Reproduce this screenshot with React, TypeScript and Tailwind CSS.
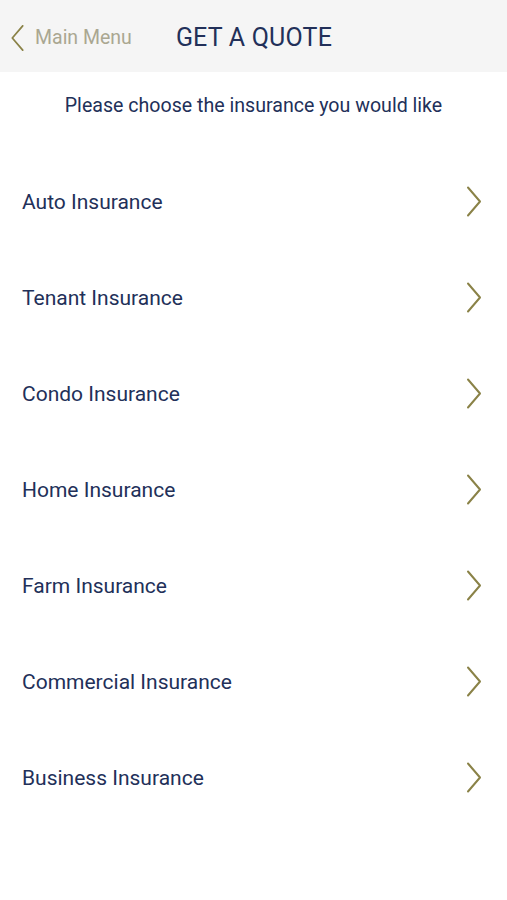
const ITEMS = [
  "Auto Insurance",
  "Tenant Insurance",
  "Condo Insurance",
  "Home Insurance",
  "Farm Insurance",
  "Commercial Insurance",
  "Business Insurance",
];

function Chevron({ left = false, className = "" }: { left?: boolean; className?: string }) {
  return (
    <svg
      viewBox="0 0 16 30"
      className={className}
      fill="none"
      stroke="currentColor"
      strokeWidth={2}
      strokeLinecap="round"
      strokeLinejoin="round"
    >
      {left ? <path d="M14 1 L2 15 L14 29" /> : <path d="M2 1 L14 15 L2 29" />}
    </svg>
  );
}

export default function App() {
  return (
    <div
      className="min-h-[900px] w-full bg-white"
      style={{ fontFamily: "Roboto, 'Noto Sans', sans-serif" }}
    >
      <header className="flex h-[72px] items-center bg-[#f5f5f5] pl-[10px] pt-[4px]">
        <button type="button" className="flex items-center">
          <Chevron left className="h-[26px] w-[15px] text-[#8a8247]" />
          <span className="ml-[10px] text-[19.5px] text-[#aaa791]">Main Menu</span>
        </button>
        <h1 className="ml-[44px] text-[25px] tracking-[0.2px] text-[#223059]">
          GET A QUOTE
        </h1>
      </header>

      <p className="mt-[21px] text-center text-[19.6px] leading-[26px] text-[#223059]">
        Please choose the insurance you would like
      </p>

      <ul className="mt-[35px]">
        {ITEMS.map((item) => (
          <li
            key={item}
            className="flex h-[96px] items-center justify-between pl-[22px] pr-[25px]"
          >
            <span className="pt-[2px] text-[21px] text-[#223059]">{item}</span>
            <Chevron className="-mt-[1px] h-[31px] w-[16px] text-[#8a8247]" />
          </li>
        ))}
      </ul>
    </div>
  );
}
